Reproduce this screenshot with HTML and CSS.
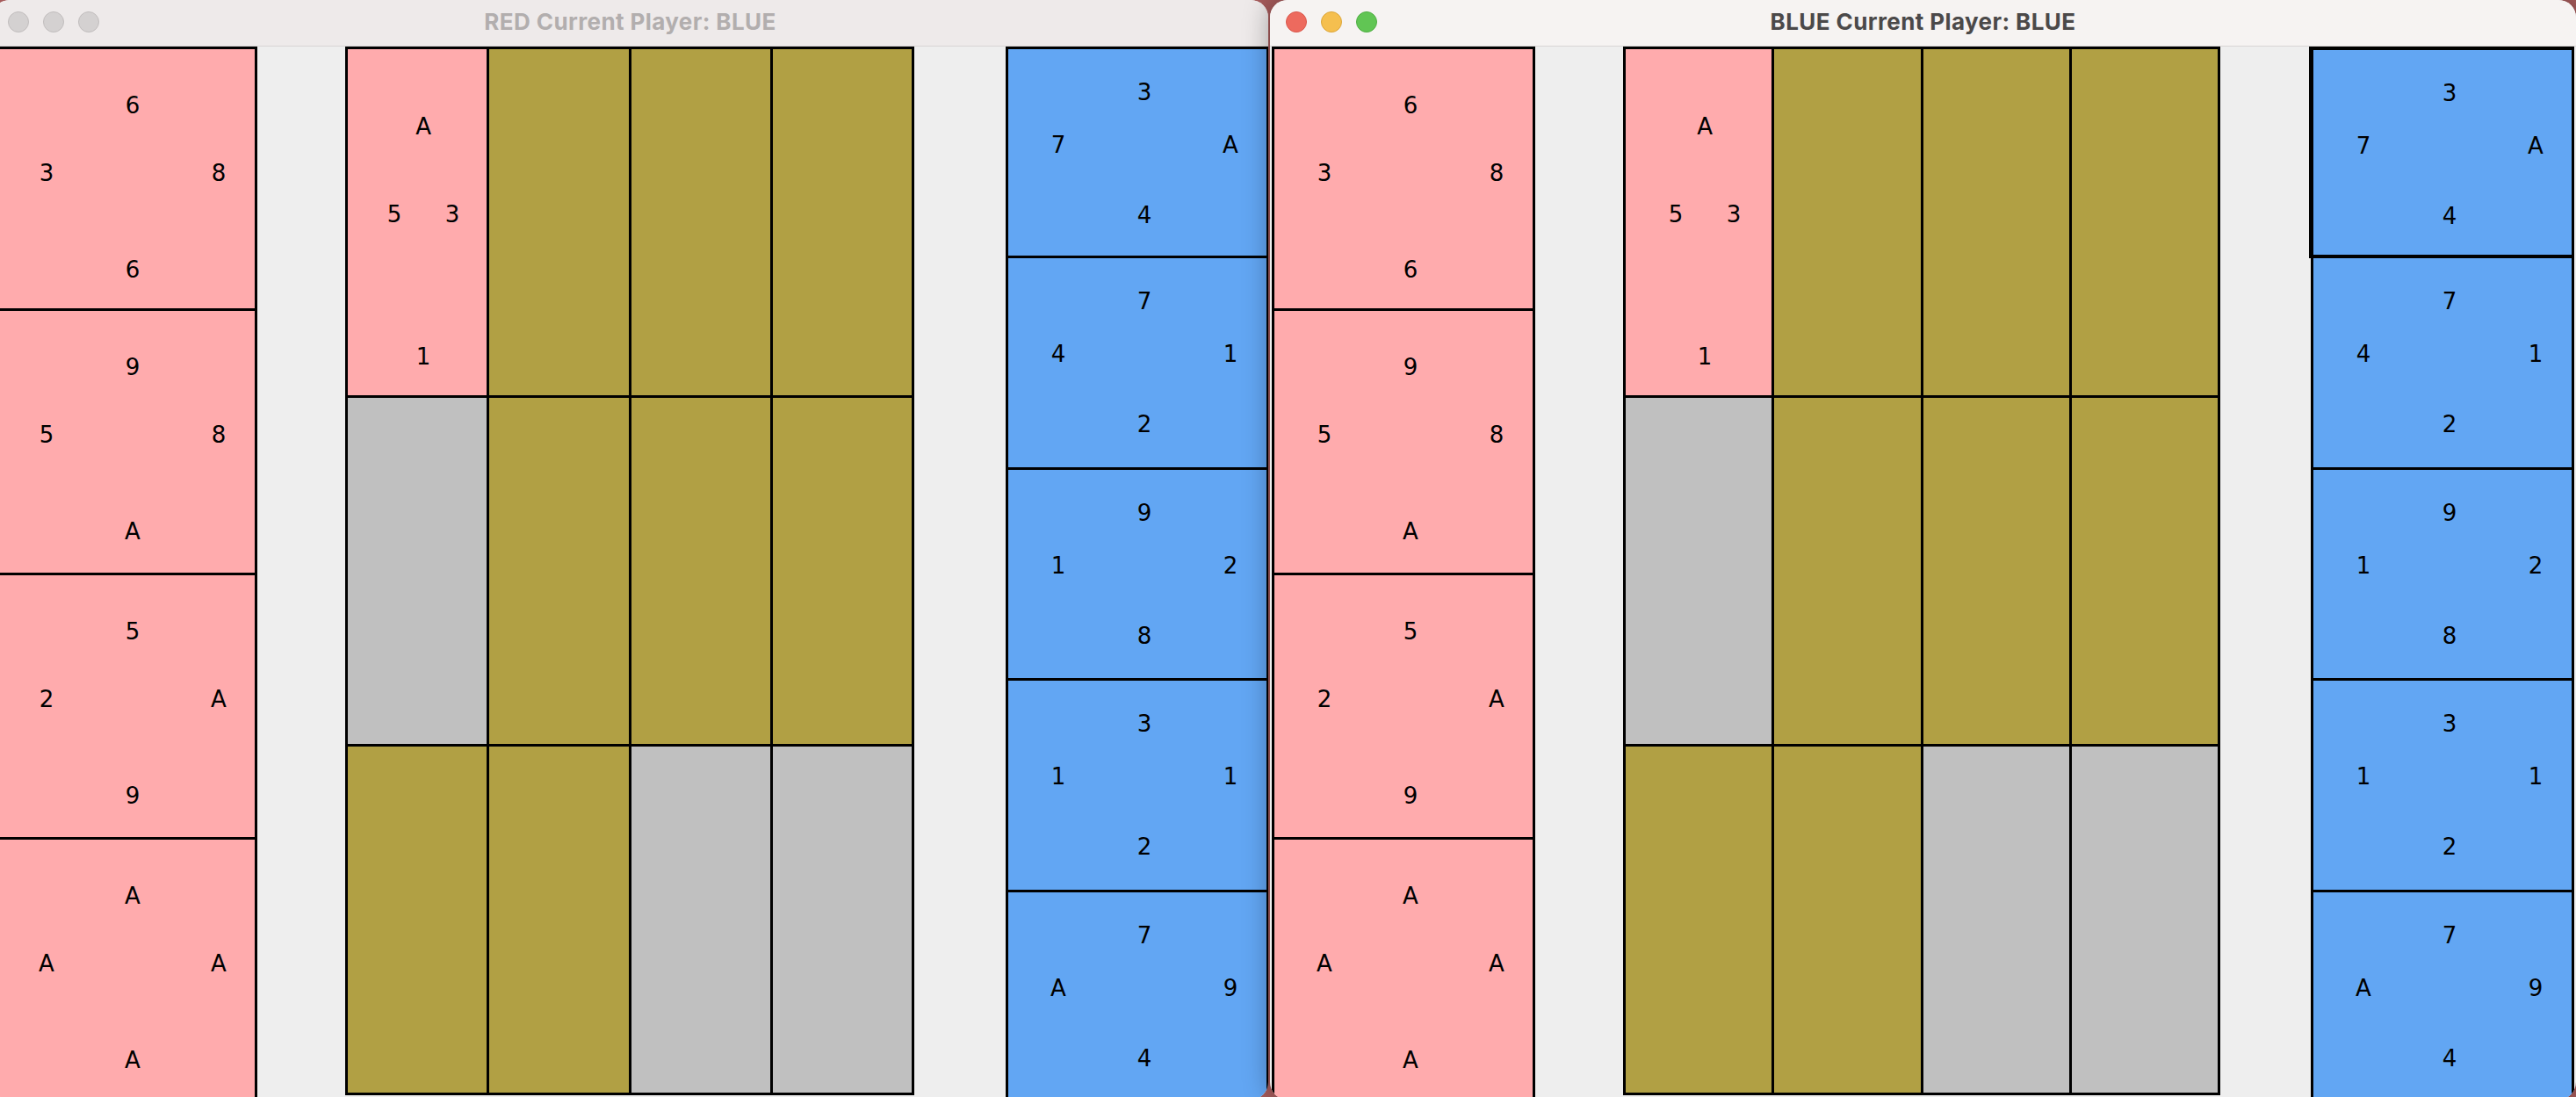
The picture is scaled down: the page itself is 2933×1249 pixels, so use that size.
FILE: index.html
```html
<!DOCTYPE html>
<html lang="en">
<head>
    <meta charset="UTF-8">
    <title>Card Game</title>
    <link rel="stylesheet" href="styles.css">
</head>
<body>
    <!-- RED player's window (inactive) -->
    <div class="window window-red">
        <div class="titlebar">
            <div class="lights">
                <span class="light"></span>
                <span class="light"></span>
                <span class="light"></span>
            </div>
            <div class="title">RED Current Player: BLUE</div>
            <div></div>
        </div>
        <div class="table">
            <div class="hand hand-red">
                <div class="card"><span class="v v-top">6</span><span class="v v-left">3</span><span class="v v-right">8</span><span class="v v-bottom">6</span></div>
                <div class="card"><span class="v v-top">9</span><span class="v v-left">5</span><span class="v v-right">8</span><span class="v v-bottom">A</span></div>
                <div class="card"><span class="v v-top">5</span><span class="v v-left">2</span><span class="v v-right">A</span><span class="v v-bottom">9</span></div>
                <div class="card"><span class="v v-top">A</span><span class="v v-left">A</span><span class="v v-right">A</span><span class="v v-bottom">A</span></div>
            </div>
            <div class="board">
                <div class="slot slot-red"><span class="v v-top">A</span><span class="v v-left">5</span><span class="v v-right">3</span><span class="v v-bottom">1</span></div>
                <div class="slot slot-open"></div>
                <div class="slot slot-open"></div>
                <div class="slot slot-open"></div>
                <div class="slot slot-hole"></div>
                <div class="slot slot-open"></div>
                <div class="slot slot-open"></div>
                <div class="slot slot-open"></div>
                <div class="slot slot-open"></div>
                <div class="slot slot-open"></div>
                <div class="slot slot-hole"></div>
                <div class="slot slot-hole"></div>
            </div>
            <div class="hand hand-blue">
                <div class="card"><span class="v v-top">3</span><span class="v v-left">7</span><span class="v v-right">A</span><span class="v v-bottom">4</span></div>
                <div class="card"><span class="v v-top">7</span><span class="v v-left">4</span><span class="v v-right">1</span><span class="v v-bottom">2</span></div>
                <div class="card"><span class="v v-top">9</span><span class="v v-left">1</span><span class="v v-right">2</span><span class="v v-bottom">8</span></div>
                <div class="card"><span class="v v-top">3</span><span class="v v-left">1</span><span class="v v-right">1</span><span class="v v-bottom">2</span></div>
                <div class="card"><span class="v v-top">7</span><span class="v v-left">A</span><span class="v v-right">9</span><span class="v v-bottom">4</span></div>
            </div>
        </div>
    </div>

    <!-- BLUE player's window (active) -->
    <div class="window window-blue">
        <div class="titlebar">
            <div class="lights">
                <span class="light light-close"></span>
                <span class="light light-min"></span>
                <span class="light light-max"></span>
            </div>
            <div class="title">BLUE Current Player: BLUE</div>
            <div></div>
        </div>
        <div class="table">
            <div class="hand hand-red">
                <div class="card"><span class="v v-top">6</span><span class="v v-left">3</span><span class="v v-right">8</span><span class="v v-bottom">6</span></div>
                <div class="card"><span class="v v-top">9</span><span class="v v-left">5</span><span class="v v-right">8</span><span class="v v-bottom">A</span></div>
                <div class="card"><span class="v v-top">5</span><span class="v v-left">2</span><span class="v v-right">A</span><span class="v v-bottom">9</span></div>
                <div class="card"><span class="v v-top">A</span><span class="v v-left">A</span><span class="v v-right">A</span><span class="v v-bottom">A</span></div>
            </div>
            <div class="board">
                <div class="slot slot-red"><span class="v v-top">A</span><span class="v v-left">5</span><span class="v v-right">3</span><span class="v v-bottom">1</span></div>
                <div class="slot slot-open"></div>
                <div class="slot slot-open"></div>
                <div class="slot slot-open"></div>
                <div class="slot slot-hole"></div>
                <div class="slot slot-open"></div>
                <div class="slot slot-open"></div>
                <div class="slot slot-open"></div>
                <div class="slot slot-open"></div>
                <div class="slot slot-open"></div>
                <div class="slot slot-hole"></div>
                <div class="slot slot-hole"></div>
            </div>
            <div class="hand hand-blue">
                <div class="card selected"><span class="v v-top">3</span><span class="v v-left">7</span><span class="v v-right">A</span><span class="v v-bottom">4</span></div>
                <div class="card"><span class="v v-top">7</span><span class="v v-left">4</span><span class="v v-right">1</span><span class="v v-bottom">2</span></div>
                <div class="card"><span class="v v-top">9</span><span class="v v-left">1</span><span class="v v-right">2</span><span class="v v-bottom">8</span></div>
                <div class="card"><span class="v v-top">3</span><span class="v v-left">1</span><span class="v v-right">1</span><span class="v v-bottom">2</span></div>
                <div class="card"><span class="v v-top">7</span><span class="v v-left">A</span><span class="v v-right">9</span><span class="v v-bottom">4</span></div>
            </div>
        </div>
    </div>
</body>
</html>
```

FILE: styles.css
```css
/* Basic Reset */
* {
    box-sizing: border-box;
}

html,
body {
    height: 100%;
    margin: 0;
    padding: 0;
}

body {
    background: #a65b5b; /* desktop behind the windows */
    display: flex;
    gap: 2px;
    overflow: hidden;
    font-family: 'DejaVu Sans', 'Liberation Sans', sans-serif;
}

/* Windows */
.window {
    flex: none;
    height: 1252px;
    border-radius: 20px;
    overflow: hidden;
    background: #eeeeee;
    display: flex;
    flex-direction: column;
}

.window-red {
    width: 1453px;
    margin-left: -9px; /* window is pushed slightly off screen */
}

.window-blue {
    width: 1487px;
    position: relative;
    z-index: 1;
    box-shadow: 0 0 30px rgba(0, 0, 0, 0.35);
}

/* Title bar */
.titlebar {
    flex: none;
    height: 53px;
    display: grid;
    grid-template-columns: 1fr auto 1fr;
    align-items: center;
    background: #eeeaea;
    border-bottom: 1px solid #d8d4d4;
}

.window-blue .titlebar {
    background: #f6f3f2;
}

.lights {
    display: flex;
    gap: 16px;
    padding-left: 18px;
    padding-bottom: 2px;
}

.light {
    width: 24px;
    height: 24px;
    border-radius: 50%;
    background: #d4d1d1;
    border: 1px solid #c2bebe;
}

.light-close {
    background: #ed6a5e;
    border-color: #d9574c;
}

.light-min {
    background: #f5bf4f;
    border-color: #dca63a;
}

.light-max {
    background: #61c554;
    border-color: #4fae43;
}

.title {
    font-family: Inter, 'Liberation Sans', sans-serif;
    font-size: 26px;
    font-weight: 700;
    letter-spacing: 0.4px;
    color: #b2aeae;
    padding-bottom: 4px;
}

.window-blue .title {
    color: #4b4949;
}

/* Table: hand | board | hand */
.table {
    display: flex;
    align-items: flex-start;
    flex: 1;
    padding-left: 2px;
}

.hand {
    flex: none;
    width: 300px;
    display: flex;
    flex-direction: column;
}

.card {
    flex: none;
    border: 3px solid #000000;
    display: grid;
    grid-template-columns: repeat(3, 1fr);
    font-size: 26px;
    line-height: 40px;
    color: #000000;
}

.card + .card {
    margin-top: -3px;
}

.hand-red .card {
    height: 304px;
    background: #ffabad;
    grid-template-rows: 44px 40px 37px 40px 70px 40px 1fr;
}

.hand-red .card:first-child {
    height: 301px;
}

.hand-blue .card {
    height: 243.7px;
    background: #62a6f3;
    grid-template-rows: 29px 40px 20px 40px 40px 40px 1fr;
}

.hand-blue .card:first-child {
    height: 241px;
}

.hand-blue .card.selected {
    border-width: 4px 3px 4px 5px;
    margin-left: -2px;
}

/* Card values */
.v {
    text-align: center;
    padding-left: 16px;
}

.v-top {
    grid-column: 2;
    grid-row: 2;
}

.v-left {
    grid-column: 1;
    grid-row: 4;
}

.v-right {
    grid-column: 3;
    grid-row: 4;
}

.v-bottom {
    grid-column: 2;
    grid-row: 6;
}

/* Board */
.board {
    flex: none;
    height: 1194px;
    margin-left: 100px;
    padding: 3px;
    gap: 3px;
    background: #000000;
    display: grid;
    grid-template-columns: repeat(4, 1fr);
    grid-template-rows: repeat(3, 1fr);
}

.window-red .board {
    width: 648px;
    margin-right: 104px;
}

.window-blue .board {
    width: 680px;
    margin-right: 103px;
}

.slot-open {
    background: #b1a044;
}

.slot-hole {
    background: #c0c0c0;
}

.slot-red {
    background: #ffabad;
    display: grid;
    grid-template-columns: repeat(3, 33px);
    grid-template-rows: 68px 40px 60px 40px 122px 40px 1fr;
    justify-content: center;
    font-size: 26px;
    line-height: 40px;
}

.slot-red .v {
    padding-left: 14px;
}
```
